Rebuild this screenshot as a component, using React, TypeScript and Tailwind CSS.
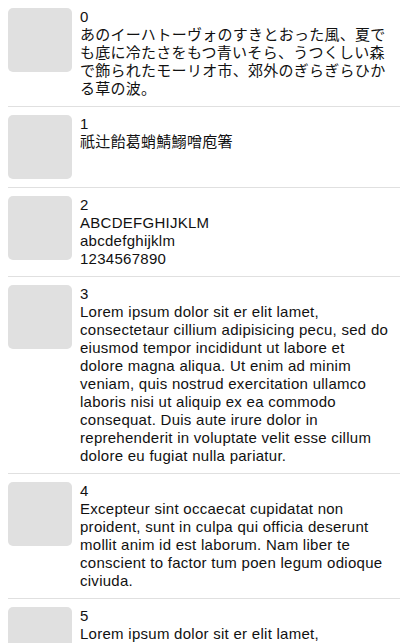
const items = [
  'あのイーハトーヴォのすきとおった風、夏でも底に冷たさをもつ青いそら、うつくしい森で飾られたモーリオ市、郊外のぎらぎらひかる草の波。',
  '祇辻飴葛蛸鯖鰯噌庖箸',
  'ABCDEFGHIJKLM\nabcdefghijklm\n1234567890',
  'Lorem ipsum dolor sit er elit lamet, consectetaur cillium adipisicing pecu, sed do eiusmod tempor incididunt ut labore et dolore magna aliqua. Ut enim ad minim veniam, quis nostrud exercitation ullamco laboris nisi ut aliquip ex ea commodo consequat. Duis aute irure dolor in reprehenderit in voluptate velit esse cillum dolore eu fugiat nulla pariatur.',
  'Excepteur sint occaecat cupidatat non proident, sunt in culpa qui officia deserunt mollit anim id est laborum. Nam liber te conscient to factor tum poen legum odioque civiuda.',
  'Lorem ipsum dolor sit er elit lamet, consectetaur cillium adipisicing pecu, sed do eiusmod tempor incididunt ut labore et dolore magna aliqua. Ut enim ad minim veniam, quis nostrud exercitation ullamco laboris nisi ut aliquip ex ea commodo consequat. Duis aute irure dolor in reprehenderit in voluptate velit esse cillum dolore eu fugiat nulla pariatur.',
]

export default function App() {
  return (
    <div
      className="min-h-screen bg-white text-[#111] text-[15px] leading-[18px] tracking-[0.27px]"
      style={{ fontFamily: '"Liberation Sans", "Noto Sans CJK JP", sans-serif' }}
    >
      {items.map((text, i) => (
        <div key={i} className="ml-2 border-b border-[#e0e0e0]">
          <div className="flex items-start py-2 pr-2">
            {/* Thumbnail placeholder */}
            <div className="w-16 h-16 shrink-0 rounded-[5px] bg-[#e0e0e0]" />
            <div className="ml-2 min-w-0 flex-1 whitespace-pre-line">
              <div>{i}</div>
              <div>{text}</div>
            </div>
          </div>
        </div>
      ))}
    </div>
  )
}
